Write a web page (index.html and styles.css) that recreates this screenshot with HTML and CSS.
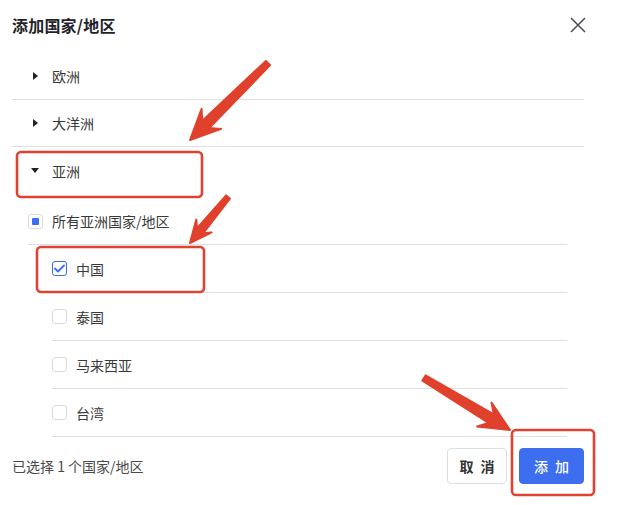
FILE: index.html
```html
<!DOCTYPE html>
<html lang="zh-CN">
<head>
<meta charset="utf-8">
<title>添加国家/地区</title>
<link rel="stylesheet" href="styles.css">
</head>
<body>
<div class="dialog">
  <div class="header">
    <div class="title">添加国家/地区</div>
    <button class="close" aria-label="关闭">
      <svg width="18" height="18" viewBox="0 0 18 18"><path d="M2 2L16 16M16 2L2 16" stroke="#4a4d55" stroke-width="1.5" fill="none"/></svg>
    </button>
  </div>

  <div class="tree">
    <div class="row top">
      <span class="caret right"></span><span class="label">欧洲</span>
    </div>
    <div class="row top">
      <span class="caret right"></span><span class="label">大洋洲</span>
    </div>
    <div class="row top open">
      <span class="caret down"></span><span class="label">亚洲</span>
    </div>
    <div class="children">
      <div class="row all">
        <span class="cb indeterminate"></span><span class="label">所有亚洲国家/地区</span>
      </div>
      <div class="row leaf">
        <span class="cb checked"><svg width="11" height="9" viewBox="0 0 11 9"><path d="M1 4.5L4 7.5L10 1.5" stroke="#3d6ef0" stroke-width="1.8" fill="none" stroke-linecap="round" stroke-linejoin="round"/></svg></span><span class="label">中国</span>
      </div>
      <div class="row leaf">
        <span class="cb"></span><span class="label">泰国</span>
      </div>
      <div class="row leaf">
        <span class="cb"></span><span class="label">马来西亚</span>
      </div>
      <div class="row leaf">
        <span class="cb"></span><span class="label">台湾</span>
      </div>
    </div>
  </div>

  <div class="footer">
    <div class="count">已选择 1 个国家/地区</div>
    <div class="actions">
      <button class="btn cancel"><span>取</span><span>消</span></button>
      <button class="btn primary"><span>添</span><span>加</span></button>
    </div>
  </div>
</div>

<svg class="marks" width="623" height="505" viewBox="0 0 623 505">
  <g fill="none" stroke="#de4332" stroke-width="2.6">
    <rect x="17" y="152" width="185" height="45" rx="4"/>
    <rect x="37" y="247" width="167" height="45" rx="4"/>
    <rect x="512" y="430" width="82" height="65" rx="4"/>
  </g>
  <g fill="#e0412c" stroke="#e0412c" stroke-width="2" stroke-linejoin="round">
    <polygon points="270.1,65.1 209.2,128.1 221.2,128.9 190,140 201.6,108.9 202.2,120.9 265.9,60.9"/>
    <polygon points="229.9,198.6 203.3,233.2 211.7,232.4 190,243 196.3,219.6 197.1,228.2 226.1,195.4"/>
    <polygon points="422.4,380.6 488.6,422.9 477.1,426.5 510,430 491.5,402.5 493.8,414.3 425.6,375.4"/>
  </g>
</svg>
</body>
</html>
```

FILE: styles.css
```css
* { box-sizing: border-box; }
html, body {
  margin: 0;
  padding: 0;
  background: #ffffff;
}
body {
  width: 623px;
  height: 505px;
  position: relative;
  overflow: hidden;
  font-family: "Noto Sans CJK SC", "Noto Sans", sans-serif;
  color: #333333;
}
.dialog {
  width: 623px;
  padding: 0 39px 0 12px;
}
.header {
  height: 53px;
  display: flex;
  align-items: center;
  justify-content: space-between;
  padding-bottom: 4px;
}
.title {
  font-size: 16px;
  font-weight: 600;
  color: #1f2329;
  letter-spacing: 0.2px;
}
.close {
  border: 0;
  background: none;
  padding: 0;
  width: 18px;
  height: 18px;
  margin-right: -3px;
  display: flex;
}
.row {
  display: flex;
  align-items: center;
  font-size: 14px;
  color: #3a3a3a;
}
.row.top {
  height: 47px;
  border-bottom: 1px solid #dedfe3;
  padding-left: 19px;
}
.row.top.open {
  border-bottom: 0;
  height: 47px;
}
.caret {
  width: 0;
  height: 0;
  margin-right: 15px;
}
.caret.right {
  border-top: 4px solid transparent;
  border-bottom: 4px solid transparent;
  border-left: 5px solid #222222;
  margin-left: 2px;
  margin-right: 14px;
}
.caret.down {
  border-left: 4px solid transparent;
  border-right: 4px solid transparent;
  border-top: 5px solid #222222;
  margin-left: 0;
  margin-right: 13px;
}
.children {
  padding: 4px 17px 0 16px;
}
.row.all {
  height: 47px;
  border-bottom: 1px solid #dedfe3;
}
.row.leaf {
  height: 48px;
  border-bottom: 1px solid #dedfe3;
  margin-left: 24px;
}
.cb {
  width: 15px;
  height: 15px;
  border: 1px solid #d9dbe0;
  border-radius: 3px;
  background: #fff;
  margin-right: 9px;
  display: flex;
  align-items: center;
  justify-content: center;
  flex: none;
}
.cb.indeterminate::after {
  content: "";
  width: 7px;
  height: 7px;
  background: #3d6ef0;
  border-radius: 1px;
}
.cb.checked {
  border-color: #3d6ef0;
}
.label {
  line-height: 20px;
}
.footer {
  display: flex;
  align-items: center;
  justify-content: space-between;
  padding-top: 11px;
}
.count {
  font-size: 14px;
  color: #4a4a4a;
}
.actions {
  display: flex;
  gap: 12px;
}
.btn {
  height: 36px;
  border-radius: 4px;
  font-family: "Noto Sans CJK SC", "Noto Sans", sans-serif;
  font-size: 14px;
  font-weight: 600;
  padding: 0;
  display: flex;
  align-items: center;
  justify-content: center;
  gap: 7px;
}
.btn.cancel {
  width: 60px;
  background: #fff;
  border: 1px solid #dcdee3;
  color: #333333;
}
.btn.primary {
  width: 65px;
  background: #3d6ef0;
  border: 1px solid #3d6ef0;
  color: #ffffff;
  font-weight: 500;
}
.marks {
  position: absolute;
  left: 0;
  top: 0;
  pointer-events: none;
}
```
